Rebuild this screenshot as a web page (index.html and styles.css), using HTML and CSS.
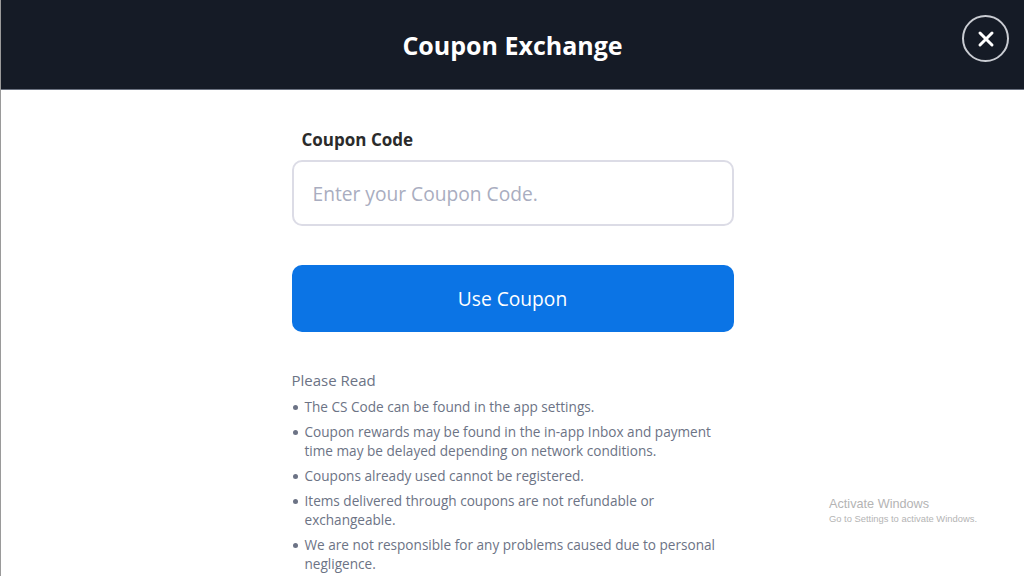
FILE: index.html
```html
<!DOCTYPE html>
<html lang="en">
  <head>
    <meta charset="UTF-8" />
    <meta name="viewport" content="width=device-width, initial-scale=1.0" />
    <title>Coupon Exchange</title>
    <link rel="stylesheet" href="styles.css">
  </head>
  <body>
    <div class="header">
      <h1>Coupon Exchange</h1>
      <button type="button" class="btn-close" aria-label="Close">
        <svg width="18" height="18" viewBox="0 0 18 18">
          <path d="M3 3 L15 15 M15 3 L3 15" stroke="#fff" stroke-width="3" stroke-linecap="round" />
        </svg>
      </button>
    </div>

    <div class="content">
      <form class="coupon-form">
        <label for="coupon">Coupon Code</label>
        <input type="text" id="coupon" name="coupon" placeholder="Enter your Coupon Code." />
        <button type="submit" class="btn-use">Use Coupon</button>
      </form>

      <div class="notice">
        <h3>Please Read</h3>
        <ul>
          <li>The CS Code can be found in the app settings.</li>
          <li>Coupon rewards may be found in the in-app Inbox and payment time may be delayed depending on network conditions.</li>
          <li>Coupons already used cannot be registered.</li>
          <li>Items delivered through coupons are not refundable or exchangeable.</li>
          <li>We are not responsible for any problems caused due to personal negligence.</li>
        </ul>
      </div>
    </div>

    <!-- marca d'agua do windows -->
    <div class="watermark">
      <div class="wm-title">Activate Windows</div>
      <div class="wm-sub">Go to Settings to activate Windows.</div>
    </div>
  </body>
</html>
```

FILE: styles.css
```css
* {
  margin: 0;
  padding: 0;
  box-sizing: border-box;
  font-family: "Open Sans", "Noto Sans", sans-serif;
}

body {
  background-color: #fff;
  height: 100vh;
  overflow: hidden;
  border-left: 1px solid #9a9a9a;
}

.header {
  position: relative;
  height: 90px;
  background-color: #151b26;
  border-bottom: 1px solid #6b7280;
  display: flex;
  justify-content: center;
  align-items: center;
}

.header h1 {
  color: #fff;
  font-size: 25px;
  font-weight: bold;
  margin-top: 1px;
}

.btn-close {
  position: absolute;
  right: 15px;
  top: 15px;
  width: 47px;
  height: 47px;
  border-radius: 50%;
  border: 2px solid #c9ccd2;
  background-color: #151b26;
  display: flex;
  justify-content: center;
  align-items: center;
  cursor: pointer;
}

.content {
  width: 442px;
  margin: 0 auto;
  padding-top: 38px;
}

.coupon-form label {
  display: block;
  padding-left: 10px;
  font-size: 17px;
  font-weight: bold;
  color: #2b2b2b;
  line-height: 24px;
  margin-bottom: 8px;
}

.coupon-form input {
  display: block;
  width: 100%;
  height: 66px;
  padding: 0 19px;
  border: 2px solid #dcdce6;
  border-radius: 10px;
  font-size: 19.2px;
  color: #333;
}

.coupon-form input::placeholder {
  color: #a9adc0;
}

.coupon-form input:focus {
  outline: none;
}

.btn-use {
  display: block;
  width: 100%;
  height: 67px;
  margin-top: 39px;
  background-color: #0b74e5;
  color: #fff;
  border: none;
  border-radius: 10px;
  font-size: 19.2px;
  cursor: pointer;
}

.notice {
  margin-top: 37px;
  color: #6c7385;
}

.notice h3 {
  font-size: 15px;
  font-weight: normal;
  line-height: 22px;
  margin-bottom: 6px;
}

.notice ul {
  list-style: none;
}

.notice li {
  position: relative;
  padding-left: 13px;
  font-size: 13.6px;
  line-height: 19px;
  margin-bottom: 6px;
}

.notice li::before {
  content: "";
  position: absolute;
  left: 1px;
  top: 8px;
  width: 5px;
  height: 5px;
  border-radius: 50%;
  background: #6c7385;
}

.watermark {
  position: absolute;
  left: 829px;
  top: 496px;
  color: #b4b4b4;
}

.wm-title {
  font-family: "Liberation Sans", sans-serif;
  font-size: 12.7px;
  line-height: 16px;
}

.wm-sub {
  font-family: "Liberation Sans", sans-serif;
  font-size: 9.4px;
  line-height: 13px;
}
```
